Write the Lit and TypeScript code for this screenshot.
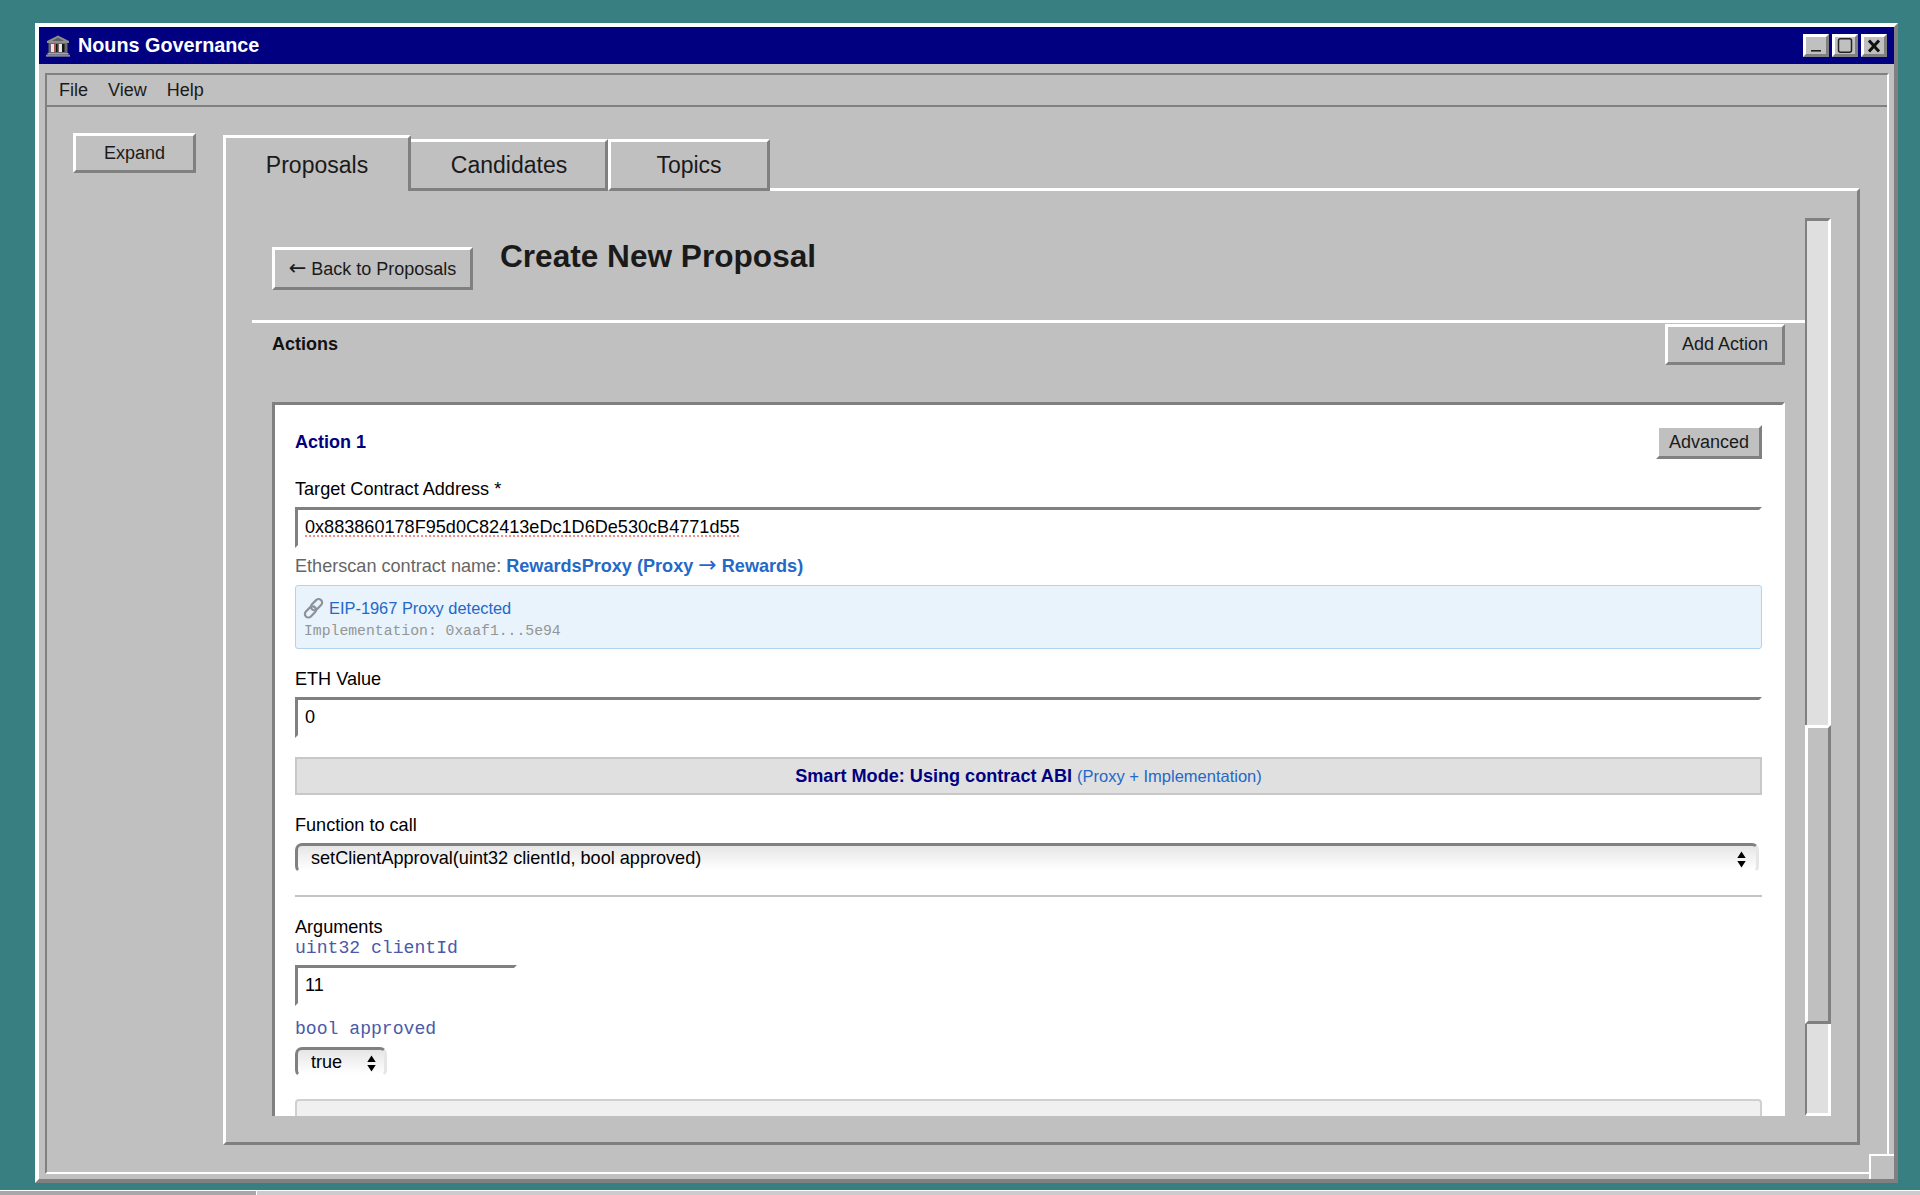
import { LitElement, html, css } from "lit";
import { customElement } from "lit/decorators.js";

const updown = html`<svg class="updown" width="9" height="17" viewBox="0 0 9 17"><path d="M4.5 0.5 L8.7 7 H0.3 Z M4.5 16.5 L0.3 10 H8.7 Z" fill="#000"/></svg>`;

@customElement("app-root")
export class AppRoot extends LitElement {
  static styles = css`
    :host { display: flex; flex-direction: column; height: 1195px; overflow: hidden; background: #377f80; font-family: "Liberation Sans", Arial, sans-serif; font-size: 18px; color: #1a1a1a; }
    *, *::before, *::after { box-sizing: border-box; }
    .desk { flex: 1; min-height: 0; padding: 23px 22px 7px 35px; }
    .taskbar { height: 5px; display: flex; border-top: 1px solid #fff; }
    .start { width: 257px; background: #a8a8a8; border-right: 1px solid #fff; }
    .rest { flex: 1; background: #cccccc; }

    .window { position: relative; height: 100%; display: flex; flex-direction: column; background: #c0c0c0; border: 4px solid; border-color: #fff #808080 #808080 #fff; }
    .title { height: 37px; flex: none; background: #000080; color: #fff; display: flex; align-items: center; padding: 0 7px 0 7px; font-weight: 700; font-size: 19.8px; }
    .title .appicon { margin-right: 8px; }
    .title .name { flex: 1; }
    .winbtns { display: flex; gap: 3px; }
    .winbtn { width: 26px; height: 23px; background: #c0c0c0; border: 3px solid; border-color: #fff #808080 #808080 #fff; display: flex; align-items: center; justify-content: center; padding: 0; }
    .frame { flex: 1; min-height: 0; margin: 9px 5px 5px 6px; display: flex; flex-direction: column; border: 2px solid; border-color: #808080 #fff #fff #808080; }
    .menu { height: 32px; flex: none; display: flex; gap: 20px; align-items: center; padding: 0 12px; border-bottom: 2px solid #808080; line-height: 1; }
    .work { flex: 1; min-height: 0; display: flex; gap: 27px; padding: 26px 27px 27px 26px; }
    .btn { background: #c0c0c0; border: 3px solid; border-color: #fff #808080 #808080 #fff; display: flex; align-items: center; justify-content: center; font: inherit; color: #1a1a1a; padding: 0; }
    .expand { width: 123px; height: 40px; flex: none; }
    .main { flex: 1; min-width: 0; display: flex; flex-direction: column; margin-top: 2px; }
    .tabs { display: flex; align-items: flex-end; height: 56px; flex: none; position: relative; z-index: 1; margin-bottom: -3px; }
    .tab { height: 52px; border: 3px solid; border-color: #fff #808080 #808080 #fff; font-size: 23px; display: flex; align-items: center; justify-content: center; }
    .tab.active { height: 56px; border-bottom: none; background: #c0c0c0; padding-top: 1px; }
    .t1 { width: 188px; } .t2 { width: 197px; border-left: none; padding-left: 2px; } .t3 { width: 162px; }
    .panel { flex: 1; min-height: 0; display: flex; padding: 27px 26px 26px; border: 3px solid; border-color: #fff #808080 #808080 #fff; }
    .viewport { flex: 1; min-width: 0; overflow: hidden; }
    .header { height: 102px; display: flex; gap: 27px; padding: 20px 20px 0; align-items: flex-start; }
    .back { width: 201px; height: 43px; margin-top: 9px; flex: none; padding-top: 2px; }
    .arrow { font-family: "DejaVu Sans", sans-serif; font-size: 21px; line-height: 18px; font-weight: 400; }
    .arrow2 { font-family: "DejaVu Sans", sans-serif; font-size: 22px; line-height: 18px; font-weight: 400; }
    h1 { margin: 0; font-size: 31.6px; line-height: 36px; font-weight: 700; color: #1a1a1a; }
    .rule { height: 3px; background: #fff; }
    .actions-row { display: flex; justify-content: space-between; align-items: center; padding: 1px 20px 0; margin-bottom: 37px; }
    .actions-row b { font-size: 18px; color: #111; }
    .addaction { width: 120px; height: 41px; }
    .card { margin: 0 20px; background: #fff; border: 3px solid; border-color: #808080 #fff #fff #808080; padding: 20px; color: #000; font-size: 18.1px; }
    .cardhead { display: flex; justify-content: space-between; align-items: center; margin-bottom: 20px; }
    .cardhead b { color: #000080; font-size: 18px; }
    .advanced { width: 106px; height: 34px; font-size: 18px; }
    label, .label { display: block; line-height: 21px; margin-bottom: 7px; color: #000; font-size: 18.1px; }
    .input { display: block; width: 100%; height: 41px; border: 3px solid; border-color: #808080 #fff #fff #808080; background: #fff; padding: 0 7px; font: inherit; color: #000; outline: none; border-radius: 0; }
    .addr { text-decoration: underline dotted #f08078; text-underline-offset: 3px; }
    .etherscan { margin-top: 8px; line-height: 21px; color: #666; }
    .etherscan b { color: #2468c8; }
    .proxy { margin-top: 8px; height: 64px; background: #e8f3fc; border: 1.5px solid #b3d4f0; border-radius: 3px; padding: 11px 8px 0 7px; }
    .proxy .l1 { display: flex; align-items: center; gap: 5px; font-size: 16.4px; line-height: 23px; color: #2468c8; }
    .proxy .l2 { font-family: "Liberation Mono", monospace; font-size: 14.75px; line-height: 22px; color: #959595; margin-left: 1px; }
    .eth { margin-top: 20px; }
    .mode { margin-top: 19px; height: 38px; background: #e0e0e0; border: 2px solid #c8c8c8; display: flex; align-items: center; justify-content: center; gap: 5px; }
    .mode b { color: #000080; }
    .mode span { color: #2468c8; font-size: 16.5px; }
    .fn { margin-top: 20px; }
    .selectwrap { position: relative; display: block; height: 30px; margin-right: 3px; }
    select { appearance: none; -webkit-appearance: none; display: block; width: 100%; height: 100%; border: 3px solid; border-color: #808080 #e6e6e6 #fff #808080; border-radius: 7px; background: linear-gradient(#e6e6e6, #ffffff); padding: 0 0 0 13px; font: inherit; color: #000; outline: none; }
    .updown { position: absolute; right: 13px; top: 8px; pointer-events: none; }
    .selectwrap.small { margin-right: 0; }
    .small .updown { right: 11px; }
    hr { margin: 22px 0 20px; border: 0; height: 2px; background: #c4c4c4; }
    .args { line-height: 21px; color: #000; }
    .param { font-family: "Liberation Mono", monospace; font-size: 18.1px; line-height: 21px; color: #4a5aa8; }
    .p1 { margin-bottom: 6px; }
    .p2 { margin-top: 13px; margin-bottom: 7px; }
    .short { width: 222px; }
    .small { width: 92px; }
    .tail { margin-top: 22px; height: 60px; background: #f0f0f0; border: 2px solid #d0d0d0; border-radius: 4px; }

    .scroll { width: 26px; flex: none; display: flex; flex-direction: column; }
    .track { background: #dfdfdf; border: 3px solid; border-color: #808080 #fff #fff #808080; border-left-width: 2px; }
    .up { height: 507px; border-bottom: 0; }
    .down { flex: 1; border-top: 0; }
    .thumb { height: 299px; background: #c0c0c0; border: 3px solid; border-color: #fff #808080 #808080 #fff; }
    .grip { position: absolute; right: 0; bottom: 0; width: 25px; height: 25px; background: #c0c0c0; border-top: 2px solid #fff; border-left: 2px solid #fff; }
  `;

  render() {
    return html`
      <div class="desk">
        <div class="window">
          <div class="title">
            <svg class="appicon" width="24" height="22" viewBox="0 0 24 22">
              <path d="M12 0.5 L23 6 V8 H1 V6 Z" fill="#8f8f8f"/>
              <path d="M12 2.5 L18 6 H6 Z" fill="#5f5f5f"/>
              <rect x="2.5" y="8" width="19" height="10" fill="#6a6a6a"/>
              <rect x="5" y="9" width="3" height="8" fill="#e6e6e6"/>
              <rect x="8" y="9" width="2" height="8" fill="#b5514f"/>
              <rect x="10" y="9" width="1.5" height="8" fill="#141414"/>
              <rect x="13" y="9" width="3" height="8" fill="#e6e6e6"/>
              <rect x="16" y="9" width="2.5" height="8" fill="#141414"/>
              <rect x="1.5" y="18" width="21" height="1.7" fill="#a4a4a4"/>
              <rect x="0" y="19.7" width="24" height="2" fill="#8a8a8a"/>
            </svg>
            <span class="name">Nouns Governance</span>
            <div class="winbtns">
              <div class="winbtn"><svg width="18" height="16" viewBox="0 0 18 16"><rect x="4" y="12" width="10" height="1.6" fill="#222"/></svg></div>
              <div class="winbtn"><svg width="18" height="16" viewBox="0 0 18 16"><rect x="2.5" y="0.8" width="13" height="13.5" rx="2" fill="none" stroke="#222" stroke-width="1.5"/></svg></div>
              <div class="winbtn"><svg width="18" height="16" viewBox="0 0 18 16"><path d="M4 2.5 L14 13.5 M14 2.5 L4 13.5" stroke="#111" stroke-width="3"/></svg></div>
            </div>
          </div>
          <div class="frame">
            <div class="menu"><span>File</span><span>View</span><span>Help</span></div>
            <div class="work">
              <button class="btn expand">Expand</button>
              <div class="main">
                <div class="tabs">
                  <div class="tab active t1">Proposals</div>
                  <div class="tab t2">Candidates</div>
                  <div class="tab t3">Topics</div>
                </div>
                <div class="panel">
                  <div class="viewport">
                    <div class="header">
                      <button class="btn back"><span><span class="arrow">←</span> Back to Proposals</span></button>
                      <h1>Create New Proposal</h1>
                    </div>
                    <div class="rule"></div>
                    <div class="actions-row">
                      <b>Actions</b>
                      <button class="btn addaction">Add Action</button>
                    </div>
                    <div class="card">
                      <div class="cardhead">
                        <b>Action 1</b>
                        <button class="btn advanced">Advanced</button>
                      </div>
                      <label>Target Contract Address *</label>
                      <input class="input addr" spellcheck="false" .value=${"0x883860178F95d0C82413eDc1D6De530cB4771d55"} />
                      <div class="etherscan">Etherscan contract name: <b>RewardsProxy (Proxy <span class="arrow2">→</span> Rewards)</b></div>
                      <div class="proxy">
                        <div class="l1">
                          <svg width="21" height="21" viewBox="0 0 18 18">
                            <g fill="none" stroke="#8b9299" stroke-width="1.9">
                              <rect x="8.6" y="0.2" width="6" height="11" rx="3" transform="rotate(45 11.6 5.7)"/>
                              <rect x="3.4" y="6.4" width="6" height="11" rx="3" transform="rotate(45 6.4 11.9)"/>
                            </g>
                          </svg>
                          <span>EIP-1967 Proxy detected</span>
                        </div>
                        <div class="l2">Implementation: 0xaaf1...5e94</div>
                      </div>
                      <label class="eth">ETH Value</label>
                      <input class="input" .value=${"0"} />
                      <div class="mode"><b>Smart Mode: Using contract ABI</b><span>(Proxy + Implementation)</span></div>
                      <label class="fn">Function to call</label>
                      <div class="selectwrap">
                        <select><option>setClientApproval(uint32 clientId, bool approved)</option></select>
                        ${updown}
                      </div>
                      <hr />
                      <div class="args">Arguments</div>
                      <div class="param p1">uint32 clientId</div>
                      <input class="input short" .value=${"11"} />
                      <div class="param p2">bool approved</div>
                      <div class="selectwrap small">
                        <select><option>true</option><option>false</option></select>
                        ${updown}
                      </div>
                      <div class="tail"></div>
                    </div>
                  </div>
                  <div class="scroll">
                    <div class="track up"></div>
                    <div class="thumb"></div>
                    <div class="track down"></div>
                  </div>
                </div>
              </div>
            </div>
          </div>
          <div class="grip"></div>
        </div>
      </div>
      <div class="taskbar"><div class="start"></div><div class="rest"></div></div>
    `;
  }
}
